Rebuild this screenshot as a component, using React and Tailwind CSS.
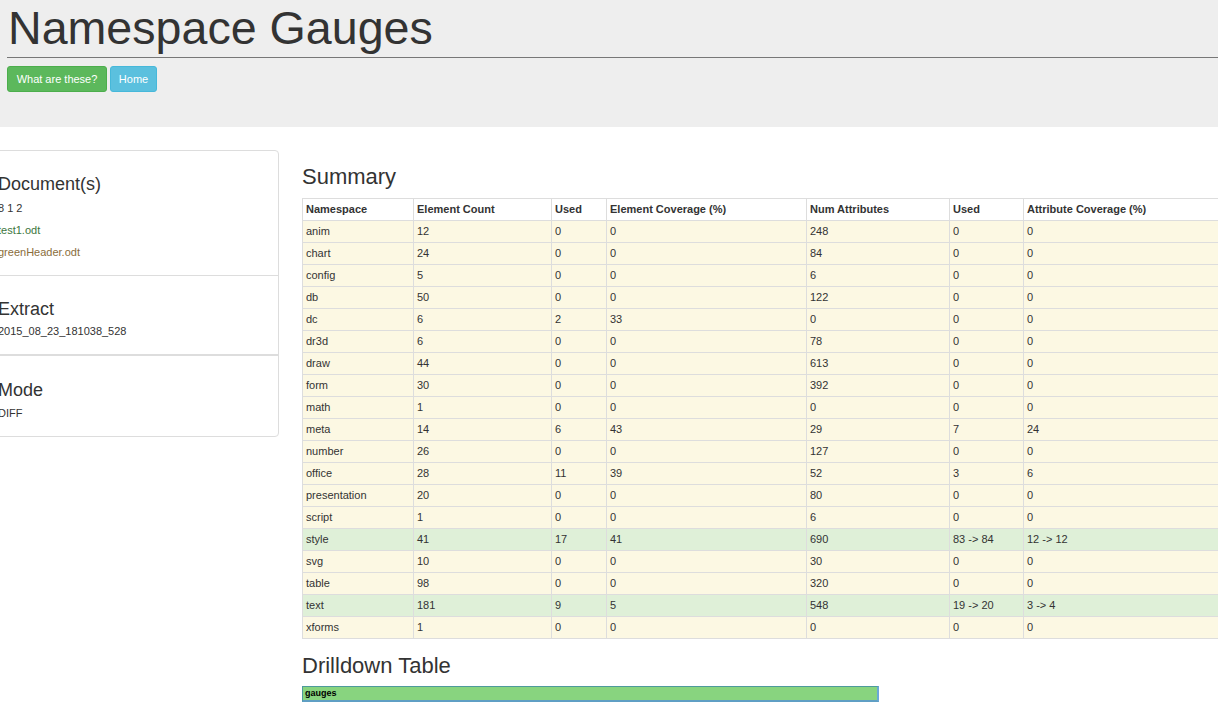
import React from "react";

const rows = [
  ["anim", "12", "0", "0", "248", "0", "0"],
  ["chart", "24", "0", "0", "84", "0", "0"],
  ["config", "5", "0", "0", "6", "0", "0"],
  ["db", "50", "0", "0", "122", "0", "0"],
  ["dc", "6", "2", "33", "0", "0", "0"],
  ["dr3d", "6", "0", "0", "78", "0", "0"],
  ["draw", "44", "0", "0", "613", "0", "0"],
  ["form", "30", "0", "0", "392", "0", "0"],
  ["math", "1", "0", "0", "0", "0", "0"],
  ["meta", "14", "6", "43", "29", "7", "24"],
  ["number", "26", "0", "0", "127", "0", "0"],
  ["office", "28", "11", "39", "52", "3", "6"],
  ["presentation", "20", "0", "0", "80", "0", "0"],
  ["script", "1", "0", "0", "6", "0", "0"],
  ["style", "41", "17", "41", "690", "83 -> 84", "12 -> 12", true],
  ["svg", "10", "0", "0", "30", "0", "0"],
  ["table", "98", "0", "0", "320", "0", "0"],
  ["text", "181", "9", "5", "548", "19 -> 20", "3 -> 4", true],
  ["xforms", "1", "0", "0", "0", "0", "0"],
];

const headers = [
  "Namespace",
  "Element Count",
  "Used",
  "Element Coverage (%)",
  "Num Attributes",
  "Used",
  "Attribute Coverage (%)",
];

const widths = [111, 138, 55, 200, 143, 74, 220];

export default function App() {
  return (
    <div
      className="w-[1218px] h-[719px] overflow-hidden bg-white text-[#333]"
      style={{ fontFamily: '"Liberation Sans", Arial, sans-serif' }}
    >
      <header className="h-[127px] bg-[#eeeeee] pl-[7px] pt-px">
        <h1 className="text-[46.6px] leading-[54px] pb-[2px] pl-px border-b border-[#777] font-normal text-[#333]">
          Namespace Gauges
        </h1>
        <div className="flex gap-[3px] mt-[8px]">
          <button className="w-[100px] h-[26px] rounded-[3px] bg-[#5cb85c] border border-[#4cae4c] text-white text-[11px] leading-none">
            What are these?
          </button>
          <button className="w-[47px] h-[26px] rounded-[3px] bg-[#5bc0de] border border-[#46b8da] text-white text-[11px] leading-none">
            Home
          </button>
        </div>
      </header>

      <div className="flex">
        <aside className="w-[298px] -ml-[19px] mt-[23px] shrink-0">
          <div className="border border-[#ddd] rounded-[4px] bg-white">
            <div className="pl-[16px] pt-[23px] pb-[12px] border-b border-[#ddd]">
              <h4 className="text-[18px] leading-[20px] font-normal text-[#333]">Document(s)</h4>
              <div className="mt-[3px] text-[11px] leading-[22px]">
                <div className="text-[#333]">8 1 2</div>
                <div className="text-[#3c763d]">test1.odt</div>
                <div className="text-[#8a6d3b]">greenHeader.odt</div>
              </div>
            </div>
            <div className="pl-[16px] pt-[23px] pb-[12px] border-b border-[#ddd]">
              <h4 className="text-[18px] leading-[20px] font-normal text-[#333]">Extract</h4>
              <div className="mt-[1px] text-[11px] leading-[22px]">2015_08_23_181038_528</div>
            </div>
            <div className="pl-[16px] pt-[24px] pb-[12px] border-t border-[#ddd]">
              <h4 className="text-[18px] leading-[20px] font-normal text-[#333]">Mode</h4>
              <div className="mt-[2px] text-[11px] leading-[22px]">DIFF</div>
            </div>
          </div>
        </aside>

        <main className="ml-[23px] shrink-0">
          <h3 className="mt-[37px] text-[22px] leading-[26px] font-normal text-[#333]">Summary</h3>
          <table
            className="mt-[8px] table-fixed border-collapse text-[11px]"
            style={{ width: widths.reduce((a, b) => a + b, 0) }}
          >
            <colgroup>
              {widths.map((w, i) => (
                <col key={i} style={{ width: w }} />
              ))}
            </colgroup>
            <thead>
              <tr className="bg-white">
                {headers.map((h, i) => (
                  <th
                    key={i}
                    className="h-[22px] p-0 pl-[3px] pb-px border border-[#ddd] text-left font-bold leading-[19px] text-[#333]"
                  >
                    {h}
                  </th>
                ))}
              </tr>
            </thead>
            <tbody>
              {rows.map((r, ri) => (
                <tr key={ri} className={r[7] ? "bg-[#dff0d8]" : "bg-[#fcf8e3]"}>
                  {r.slice(0, 7).map((c, ci) => (
                    <td
                      key={ci}
                      className="h-[22px] p-0 pl-[3px] pb-px border border-[#ddd] leading-[19px] text-[#333]"
                    >
                      {c}
                    </td>
                  ))}
                </tr>
              ))}
            </tbody>
          </table>
          <h3 className="mt-[14px] text-[22px] leading-[26px] font-normal text-[#333]">Drilldown Table</h3>
          <div className="mt-[7px] w-[577px] h-[16px] bg-[#88d47f] border-t border-l border-[#4e9a9c] border-r-2 border-b-2 border-r-[#6aa8d8] border-b-[#5f9fc4] flex items-center pl-[2px]">
            <span className="text-[9px] font-bold text-black leading-none">gauges</span>
          </div>
        </main>
      </div>
    </div>
  );
}
